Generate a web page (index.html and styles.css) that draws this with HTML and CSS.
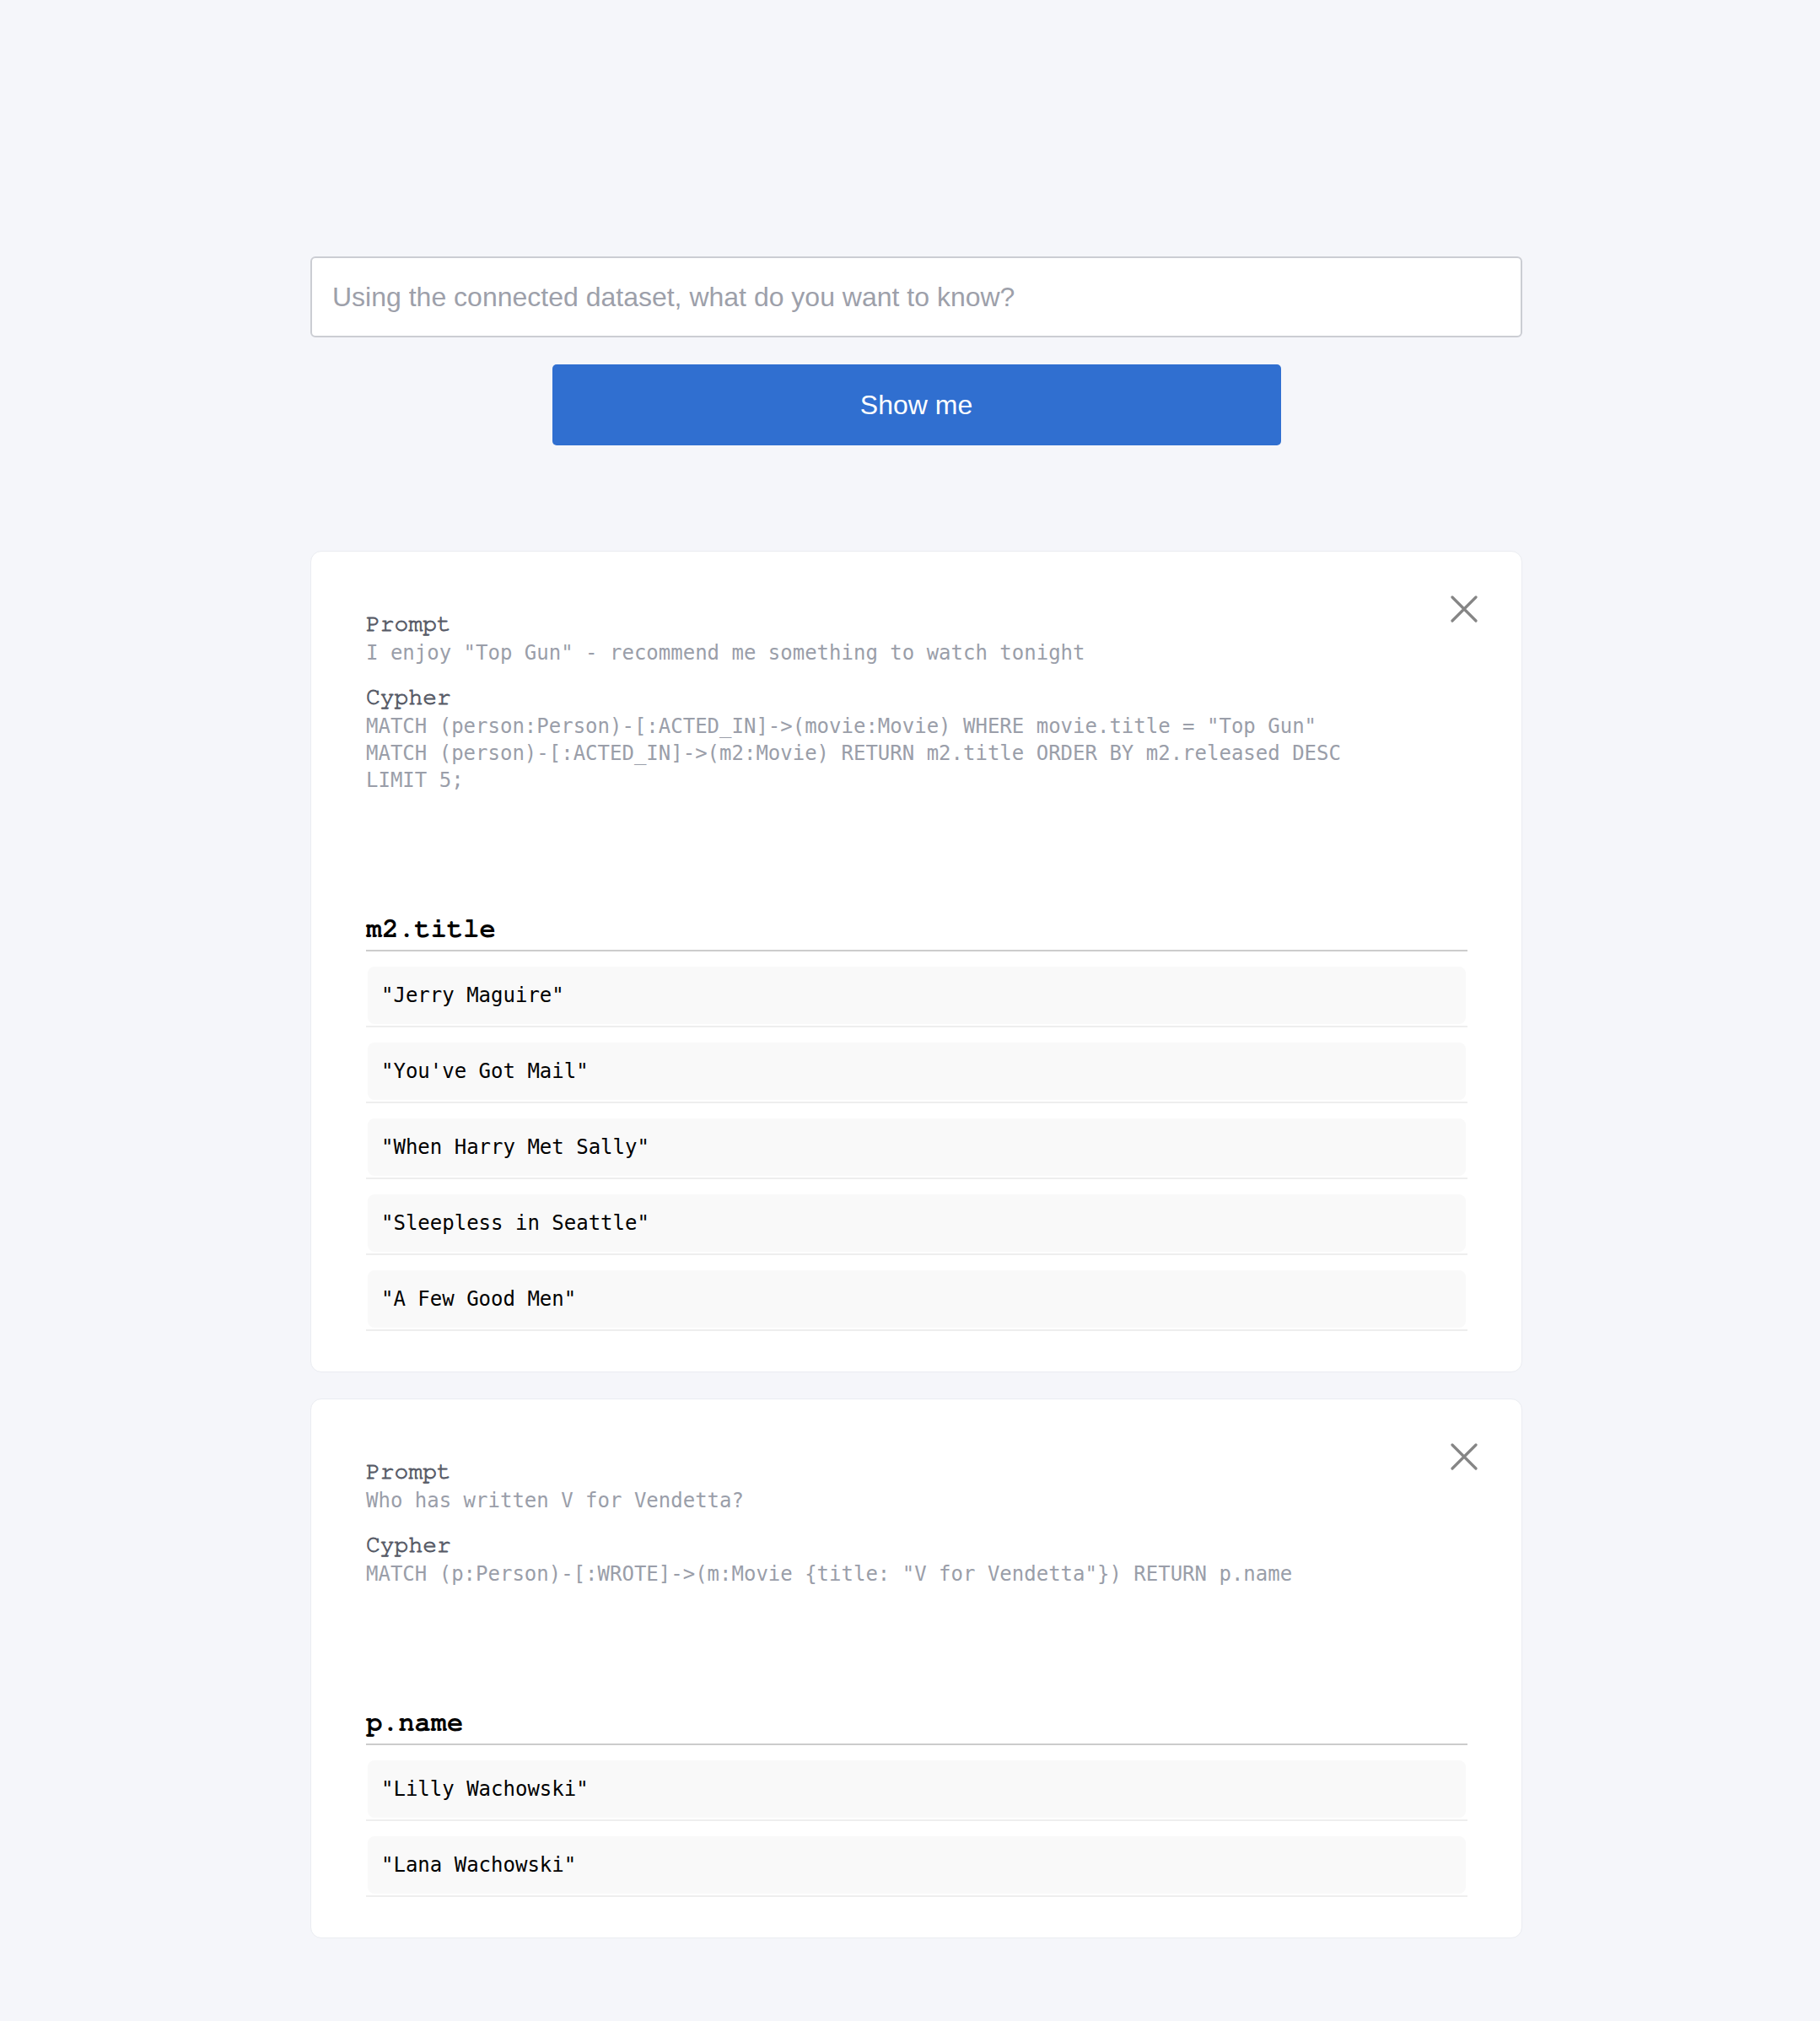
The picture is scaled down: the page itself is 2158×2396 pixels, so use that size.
FILE: index.html
```html
<!DOCTYPE html>
<html lang="en">
<head>
<meta charset="utf-8">
<title>Show me</title>
<link rel="stylesheet" href="styles.css">
</head>
<body>
<main class="container">
  <input class="ask" type="text" placeholder="Using the connected dataset, what do you want to know?">
  <button class="show" type="button">Show me</button>

  <section class="card first">
    <svg class="close" width="32" height="32" viewBox="0 0 32 32"><path d="M2 2 L30 30 M30 2 L2 30" stroke="#858585" stroke-width="3.2" stroke-linecap="round" fill="none"/></svg>
    <div class="query">
      <div class="block">
        <div class="label">Prompt</div>
        <div class="code">I enjoy "Top Gun" - recommend me something to watch tonight</div>
      </div>
      <div class="block">
        <div class="label">Cypher</div>
        <div class="code">MATCH (person:Person)-[:ACTED_IN]-&gt;(movie:Movie) WHERE movie.title = "Top Gun"
MATCH (person)-[:ACTED_IN]-&gt;(m2:Movie) RETURN m2.title ORDER BY m2.released DESC
LIMIT 5;</div>
      </div>
    </div>
    <div class="result">
      <div class="head">m2.title</div>
      <div class="row"><div class="cell">"Jerry Maguire"</div></div>
      <div class="row"><div class="cell">"You've Got Mail"</div></div>
      <div class="row"><div class="cell">"When Harry Met Sally"</div></div>
      <div class="row"><div class="cell">"Sleepless in Seattle"</div></div>
      <div class="row"><div class="cell">"A Few Good Men"</div></div>
    </div>
  </section>

  <section class="card">
    <svg class="close" width="32" height="32" viewBox="0 0 32 32"><path d="M2 2 L30 30 M30 2 L2 30" stroke="#858585" stroke-width="3.2" stroke-linecap="round" fill="none"/></svg>
    <div class="query">
      <div class="block">
        <div class="label">Prompt</div>
        <div class="code">Who has written V for Vendetta?</div>
      </div>
      <div class="block">
        <div class="label">Cypher</div>
        <div class="code">MATCH (p:Person)-[:WROTE]-&gt;(m:Movie {title: "V for Vendetta"}) RETURN p.name</div>
      </div>
    </div>
    <div class="result">
      <div class="head">p.name</div>
      <div class="row"><div class="cell">"Lilly Wachowski"</div></div>
      <div class="row"><div class="cell">"Lana Wachowski"</div></div>
    </div>
  </section>
</main>
</body>
</html>
```

FILE: styles.css
```css
html, body {
  margin: 0;
  padding: 0;
  background: #f5f6fa;
}

body {
  font-family: "Liberation Sans", Arial, sans-serif;
}

.container {
  width: 1437px;
  margin-left: 368px;
  padding-top: 304px;
  padding-bottom: 98px;
  display: flex;
  flex-direction: column;
}

.ask {
  box-sizing: border-box;
  width: 100%;
  height: 96px;
  margin: 0;
  border: 2px solid #cbcdd3;
  border-radius: 6px;
  padding: 0 24px;
  background: #ffffff;
  font-family: "Liberation Sans", Arial, sans-serif;
  font-size: 32px;
  color: #333;
  outline: none;
}

.ask::placeholder {
  color: #9da0aa;
}

.show {
  align-self: center;
  width: 864px;
  height: 96px;
  margin-top: 32px;
  border: none;
  border-radius: 5px;
  background: #306fd0;
  color: #ffffff;
  font-family: "Liberation Sans", Arial, sans-serif;
  font-size: 32px;
  padding: 0;
}

.card {
  position: relative;
  box-sizing: border-box;
  width: 100%;
  margin-top: 31px;
  background: #ffffff;
  border: 1px solid #eaecf1;
  border-radius: 13px;
  padding: 68px 64px 48px 65px;
}

.card.first {
  margin-top: 125px;
}

.close {
  position: absolute;
  top: 52px;
  right: 52px;
  display: block;
}

.block + .block {
  margin-top: 19px;
}

.label {
  font-family: "Nimbus Mono PS", "Nimbus Mono L", "FreeMono", "Courier New", "Liberation Mono", monospace;
  font-size: 28px;
  line-height: 36px;
  color: #575b67;
  -webkit-text-stroke: 0.9px #575b67;
}

.code {
  font-family: "DejaVu Sans Mono", monospace;
  font-size: 24px;
  line-height: 32px;
  color: #9a9ea9;
  white-space: pre-wrap;
}

.result {
  margin-top: 140px;
}

.head {
  font-family: "Nimbus Mono PS", "Nimbus Mono L", "FreeMono", "Courier New", "Liberation Mono", monospace;
  font-weight: bold;
  font-size: 32px;
  line-height: 40px;
  color: #000000;
  padding-bottom: 5px;
  border-bottom: 2px solid #cccccc;
}

.row {
  margin-top: 18px;
  padding: 0 2px 2px;
  border-bottom: 2px solid #eeeeee;
}

.cell {
  height: 68px;
  display: flex;
  align-items: center;
  padding-left: 16px;
  background: #f9f9f9;
  border-radius: 8px;
  font-family: "DejaVu Sans Mono", monospace;
  font-size: 24px;
  color: #000000;
  white-space: pre;
}
```
